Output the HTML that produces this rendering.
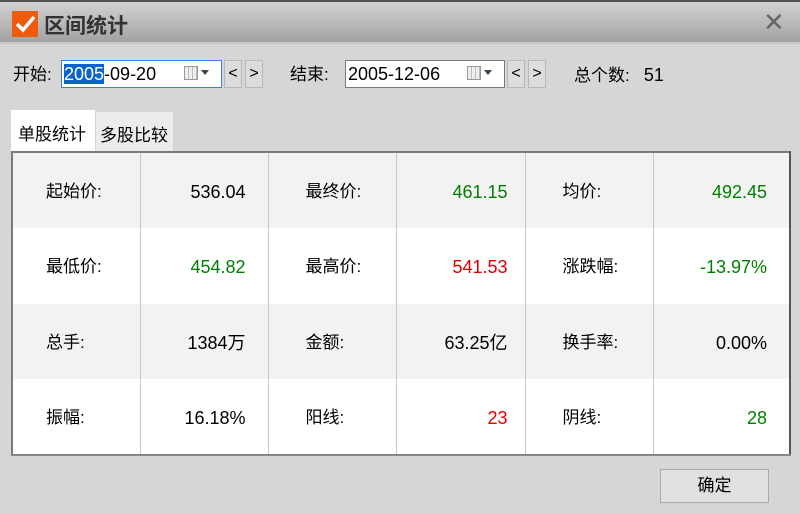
<!DOCTYPE html>
<html><head><meta charset="utf-8"><style>
*{margin:0;padding:0;box-sizing:border-box}
body{width:800px;height:513px;background:#d6d6d6;font-family:"Liberation Sans","Noto Sans CJK SC",sans-serif;position:relative;overflow:hidden;color:#000}
.a{position:absolute}
#tb{left:0;top:0;width:800px;height:44px;background:linear-gradient(#d2d2d2,#a2a2a2);border-top:2px solid #555;border-bottom:2px solid #c8c8c8}
.box{background:#fff;border:1px solid #7a7a7a;height:28px;font-size:18px;line-height:26px;padding-left:2px}
.btn{background:#dcdcdc;border:1px solid #b8b8b8;width:18px;height:28px;font-size:16px;line-height:26px;text-align:center}
.lbl{font-size:17px;line-height:20px}
table{border-collapse:collapse;table-layout:fixed;position:absolute;left:11px;top:151px;width:780px;height:305px;border:2px solid #7a7a7a;border-right-color:#555;border-bottom-color:#888;font-size:17px}
td{border-left:1px solid #c8c8c8;height:75px;line-height:20px;vertical-align:middle;white-space:nowrap;padding-top:3px}
tr:nth-child(odd){background:#f2f2f2}
tr:nth-child(even){background:#fff}
td.l{padding-left:33px;border-left:none}
td.l2{padding-left:37px}
td.v{text-align:right;padding-right:22px;font-size:18px}
td.v4{padding-right:17px}
.g{color:#008000}.r{color:#e00000}
</style></head><body>
<div id="tb" class="a"></div>
<div class="a" style="left:12px;top:11px;width:26px;height:26px;background:#ef5a0e"><svg width="26" height="26"><path d="M5 13 L11 19 L22 6" stroke="#fff" stroke-width="3.5" fill="none"/></svg></div>
<div class="a" style="left:44px;top:10px;font-size:21px;font-weight:bold;color:#333">区间统计</div>
<div class="a" style="left:763px;top:8px;font-size:26px;color:#666;line-height:28px">✕</div>

<div class="a lbl" style="left:13px;top:65px">开始:</div>
<div class="a box" style="left:61px;top:60px;width:161px;border-color:#3c7fd6"><span style="background:#0a64cc;color:#fff">2005</span>-09-20</div>
<div class="a" style="left:184px;top:66px;width:14px;height:14px;border:1px solid #999;background:repeating-linear-gradient(90deg,#eee 0 3px,#bbb 3px 4px)"></div>
<div class="a" style="left:201px;top:70px;width:0;height:0;border:4px solid transparent;border-top:5px solid #345"></div>
<div class="a btn" style="left:224px;top:60px">&lt;</div>
<div class="a btn" style="left:245px;top:60px">&gt;</div>

<div class="a lbl" style="left:290px;top:65px">结束:</div>
<div class="a box" style="left:345px;top:60px;width:160px">2005-12-06</div>
<div class="a" style="left:467px;top:66px;width:14px;height:14px;border:1px solid #999;background:repeating-linear-gradient(90deg,#eee 0 3px,#bbb 3px 4px)"></div>
<div class="a" style="left:484px;top:70px;width:0;height:0;border:4px solid transparent;border-top:5px solid #345"></div>
<div class="a btn" style="left:507px;top:60px">&lt;</div>
<div class="a btn" style="left:528px;top:60px">&gt;</div>
<div class="a lbl" style="left:574px;top:65px">总个数:&nbsp;&nbsp;&nbsp;<span style="font-size:18px">51</span></div>

<div class="a" style="left:11px;top:110px;width:84px;height:42px;background:#fff;font-size:17px;padding:10px 0 0 7px">单股统计</div>
<div class="a" style="left:96px;top:112px;width:77px;height:40px;background:#ebebeb;font-size:17px;padding:9px 0 0 4px">多股比较</div>

<table>
<colgroup><col style="width:128px"><col style="width:128px"><col style="width:128px"><col style="width:129px"><col style="width:128px"><col></colgroup>
<tr><td class="l">起始价:</td><td class="v">536.04</td><td class="l2">最终价:</td><td class="v v4 g">461.15</td><td class="l2">均价:</td><td class="v g">492.45</td></tr>
<tr><td class="l">最低价:</td><td class="v g">454.82</td><td class="l2">最高价:</td><td class="v v4 r">541.53</td><td class="l2">涨跌幅:</td><td class="v g">-13.97%</td></tr>
<tr><td class="l">总手:</td><td class="v">1384万</td><td class="l2">金额:</td><td class="v v4">63.25亿</td><td class="l2">换手率:</td><td class="v">0.00%</td></tr>
<tr><td class="l">振幅:</td><td class="v">16.18%</td><td class="l2">阳线:</td><td class="v v4 r">23</td><td class="l2">阴线:</td><td class="v g">28</td></tr>
</table>

<div class="a" style="left:660px;top:469px;width:109px;height:34px;background:#e0e0e0;border:1px solid #aaa;font-size:17px;text-align:center;line-height:32px">确定</div>
</body></html>
